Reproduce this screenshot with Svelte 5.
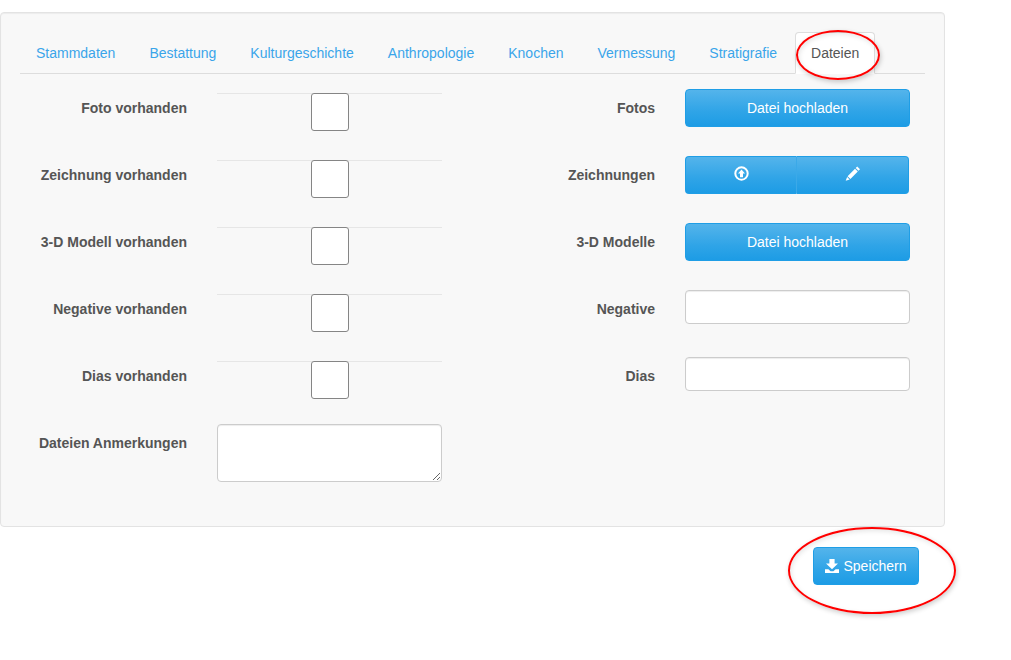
<script>
	const tabs = ['Stammdaten', 'Bestattung', 'Kulturgeschichte', 'Anthropologie', 'Knochen', 'Vermessung', 'Stratigrafie', 'Dateien'];
	const active = 'Dateien';

	const rows = [
		{ check: 'Foto vorhanden', label: 'Fotos', type: 'upload' },
		{ check: 'Zeichnung vorhanden', label: 'Zeichnungen', type: 'group' },
		{ check: '3-D Modell vorhanden', label: '3-D Modelle', type: 'upload' },
		{ check: 'Negative vorhanden', label: 'Negative', type: 'input' },
		{ check: 'Dias vorhanden', label: 'Dias', type: 'input' }
	];
</script>

<div class="page">
	<section class="well">
		<ul class="tabs">
			{#each tabs as tab}
				<li class="tab" class:active={tab === active}>
					{tab}
					{#if tab === active}
						<span class="ring tab-ring"></span>
					{/if}
				</li>
			{/each}
		</ul>

		<div class="form">
			{#each rows as row}
				<div class="label">{row.check}</div>
				<div class="check-wrap"><input class="check" type="checkbox" /></div>
				<div class="label">{row.label}</div>
				<div>
					{#if row.type === 'upload'}
						<button class="btn wide">Datei hochladen</button>
					{:else if row.type === 'group'}
						<div class="btn-group">
							<button class="btn seg first" aria-label="Hochladen">
								<svg width="15" height="15" viewBox="0 0 15 15">
									<circle cx="7.5" cy="7.5" r="6.2" fill="none" stroke="#fff" stroke-width="2" />
									<path d="M7.5 3.4 11 7.4H9V11.2H6V7.4H4Z" fill="#fff" />
								</svg>
							</button>
							<button class="btn seg" aria-label="Bearbeiten">
								<svg width="16" height="15" viewBox="0 0 16 15">
									<path d="M12.2.6 15 3.3 13.5 4.8 10.7 2.1ZM10 2.8 12.8 5.5 5.4 12.9 2.6 10.2ZM2.1 10.9 4.7 13.5 .7 14.7Z" fill="#fff" />
								</svg>
							</button>
						</div>
					{:else}
						<input class="text" type="text" />
					{/if}
				</div>
			{/each}
			<div class="label">Dateien Anmerkungen</div>
			<div><textarea class="area"></textarea></div>
		</div>
	</section>

	<div class="actions">
		<div class="save-wrap">
			<button class="btn save">
				<svg width="14" height="14" viewBox="0 0 14 14">
					<path d="M4.4 0H9.6V4.6H13L7 10.2 1 4.6H4.4ZM0 10.2H3.4L5.6 12.2H8.4L10.6 10.2H14V14H0Z" fill="#fff" />
				</svg>
				Speichern
			</button>
			<span class="ring save-ring"></span>
		</div>
	</div>
</div>

<style>
	:global(body) {
		font-family: 'Liberation Sans', Arial, sans-serif;
		font-size: 14px;
		line-height: 20px;
		color: #555;
		background: #fff;
	}

	.page {
		width: 945px;
		padding-top: 12px;
	}

	.well {
		box-sizing: border-box;
		height: 515px;
		padding: 19px;
		background: #f8f8f8;
		border: 1px solid #e3e3e3;
		border-radius: 4px;
		box-shadow: inset 0 1px 1px rgba(0, 0, 0, 0.05);
	}

	.tabs {
		display: flex;
		gap: 2px;
		margin: 0 0 15px;
		padding: 0;
		list-style: none;
		border-bottom: 1px solid #ddd;
		height: 41px;
	}

	.tab {
		position: relative;
		height: 20px;
		padding: 10px 15px;
		border: 1px solid transparent;
		border-radius: 4px 4px 0 0;
		color: #3aa5ea;
	}

	.tab.active {
		color: #555;
		background: #fff;
		border-color: #ddd #ddd transparent;
	}

	.ring {
		position: absolute;
		box-sizing: border-box;
		border: 2px solid #f00;
		border-radius: 50%;
		box-shadow: 1px 2px 5px rgba(0, 0, 0, 0.2), inset 1px 2px 5px rgba(0, 0, 0, 0.1);
		pointer-events: none;
	}

	.tab-ring {
		left: 0;
		top: -3px;
		width: 84px;
		height: 50px;
	}

	.save-wrap {
		position: relative;
		height: 38px;
	}

	.save-ring {
		left: -25px;
		top: -20px;
		width: 168px;
		height: 87px;
	}

	.form {
		display: grid;
		grid-template-columns: 167px 225px 183px 225px;
		grid-auto-rows: 67px;
		column-gap: 30px;
	}

	.label {
		padding-top: 9px;
		font-weight: 700;
		text-align: right;
	}

	.check-wrap {
		display: flex;
		justify-content: center;
		box-sizing: border-box;
		height: 38px;
		margin-top: 4px;
		border-top: 1px solid #e6e6e6;
	}

	.check {
		appearance: none;
		box-sizing: border-box;
		width: 38px;
		height: 38px;
		margin: -1px 0 0;
		background: #fff;
		border: 1px solid #858585;
		border-radius: 3px;
	}

	.btn {
		box-sizing: border-box;
		height: 38px;
		padding: 0;
		font: inherit;
		color: #fff;
		background: linear-gradient(#54b4eb, #2fa4e7 60%, #1d9ce5);
		border: 1px solid #1f9ee6;
		border-radius: 4px;
	}

	.wide {
		display: block;
		width: 225px;
	}

	.btn-group {
		display: flex;
		width: 224px;
	}

	.seg {
		flex: 1;
		display: flex;
		align-items: center;
		justify-content: center;
		padding-bottom: 3px;
		border-radius: 0 4px 4px 0;
	}

	.seg.first {
		flex: 0 0 111px;
		border-right: 0;
		border-radius: 4px 0 0 4px;
	}

	.seg:not(.first) {
		border-left-color: #3ba9e8;
	}

	.text {
		display: block;
		box-sizing: border-box;
		width: 225px;
		height: 34px;
		margin: 0;
		background: #fff;
		border: 1px solid #ccc;
		border-radius: 4px;
		box-shadow: inset 0 1px 1px rgba(0, 0, 0, 0.075);
	}

	.area {
		display: block;
		box-sizing: border-box;
		width: 225px;
		height: 58px;
		margin: 0;
		background: #fff;
		border: 1px solid #ccc;
		border-radius: 4px;
		box-shadow: inset 0 1px 1px rgba(0, 0, 0, 0.075);
	}

	.actions {
		display: flex;
		justify-content: flex-end;
		padding: 20px 26px 40px 0;
	}

	.save {
		display: flex;
		align-items: center;
		justify-content: center;
		gap: 4px;
		width: 106px;
	}
</style>
